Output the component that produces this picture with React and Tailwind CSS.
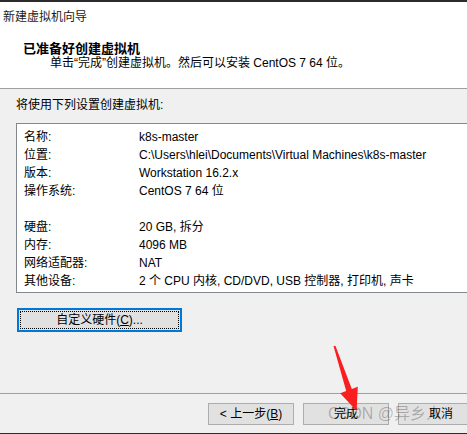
import React from 'react';

const font = { fontFamily: '"Liberation Sans", "Noto Sans CJK SC", sans-serif' };

const ROWS = [
  ['名称:', 'k8s-master'],
  ['位置:', 'C:\\Users\\hlei\\Documents\\Virtual Machines\\k8s-master'],
  ['版本:', 'Workstation 16.2.x'],
  ['操作系统:', 'CentOS 7 64 位'],
  [null, null],
  ['硬盘:', '20 GB, 拆分'],
  ['内存:', '4096 MB'],
  ['网络适配器:', 'NAT'],
  ['其他设备:', '2 个 CPU 内核, CD/DVD, USB 控制器, 打印机, 声卡'],
];

function WinBtn({ children }) {
  return (
    <div className="w-[86px] h-[22px] flex-none border border-[#adadad] bg-[#e1e1e1] flex items-center justify-center text-[12px] leading-none text-black">
      {children}
    </div>
  );
}

export default function App() {
  return (
    <div className="relative w-[467px] h-[434px] overflow-hidden bg-[#f0f0f0] flex flex-col text-black" style={font}>
      <div className="h-[2px] bg-[#2b2b2b]" />

      {/* header */}
      <div className="h-[86px] bg-white">
        <div className="pl-[3px] pt-[6px] text-[12px] leading-[18px] text-[#1a1a1a]">新建虚拟机向导</div>
        <div className="pl-[23px] mt-[15px] text-[13px] font-bold leading-[15px]">已准备好创建虚拟机</div>
        <div className="pl-[50px] text-[12px] leading-[15px]">
          单击“完成”创建虚拟机。然后可以安装 CentOS 7 64 位。
        </div>
      </div>
      <div className="h-px bg-[#a0a0a0]" />

      {/* body */}
      <div className="pt-[8px] pl-[16px] text-[12px] leading-[16px]">将使用下列设置创建虚拟机:</div>
      <div className="mt-[10px] ml-[16px] w-[460px] h-[170px] flex-none border border-[#828790] bg-white pt-[4px] pl-[7px]">
        {ROWS.map(([k, v], i) => (
          <div key={i} className="h-[18px] flex items-center text-[12px] leading-none">
            <span className="w-[115px] flex-none">{k}</span>
            <span className="whitespace-nowrap">{v}</span>
          </div>
        ))}
      </div>

      <div className="mt-[15px] ml-[17px] w-[165px] h-[24px] flex-none border-2 border-[#0078d7] bg-[#e1e1e1] p-px">
        <div className="h-full border border-dotted border-black flex items-center justify-center text-[12px] leading-none">
          自定义硬件(<span className="underline">C</span>)...
        </div>
      </div>

      <div className="flex-1" />

      {/* footer */}
      <div className="h-px bg-[#a0a0a0]" />
      <div className="mt-[9px] pl-[208px] flex gap-[9px]">
        <WinBtn>&lt; 上一步(<span className="underline">B</span>)</WinBtn>
        <WinBtn>完成</WinBtn>
        <WinBtn>取消</WinBtn>
      </div>
      <div className="h-[8px]" />
      <div className="h-px bg-[#2b2b2b]" />

      {/* watermark */}
      <div className="absolute left-[328px] top-[403px] text-[16px] leading-[22px] text-black/25 whitespace-nowrap pointer-events-none">
        CSDN @异乡人
      </div>

      {/* red arrow annotation */}
      <svg className="absolute left-0 top-0 pointer-events-none" width="467" height="434">
        <polygon
          points="333.5,346 335.5,346 351.8,389 357.8,386.8 356.6,411 340.2,393.2 346.2,391"
          fill="#fa1e1e"
        />
      </svg>
    </div>
  );
}
